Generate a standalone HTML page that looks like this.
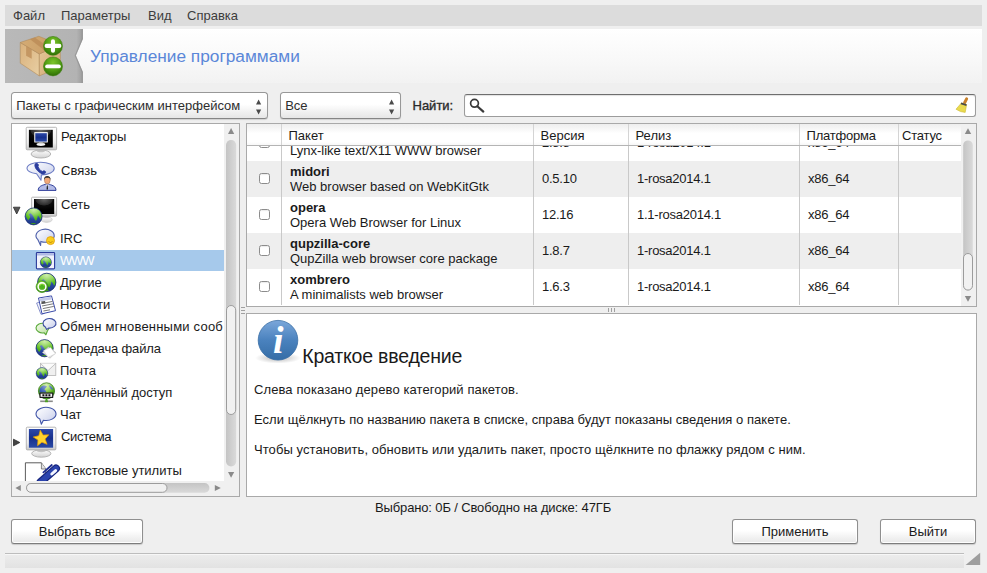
<!DOCTYPE html>
<html><head><meta charset="utf-8">
<style>
*{box-sizing:border-box;margin:0;padding:0}
html,body{width:987px;height:573px;overflow:hidden;background:#efefef}
body{font-family:"Liberation Sans",sans-serif;font-size:13px;color:#1a1a1a;position:relative;line-height:15px}
.abs{position:absolute}
#menubar{left:5px;top:5px;width:977px;height:21px;background:#dcdcdc}
#menubar span{position:absolute;top:3px;color:#3c3c3c;white-space:nowrap}
#banner{left:5px;top:29px;width:977px;height:54px;background:linear-gradient(#ffffff,#f8f8f8 60%,#f2f2f2)}
#title{left:90px;top:46px;line-height:20px;font-size:17.3px;color:#5b87d8;white-space:nowrap}
.combo{top:92px;height:27px;border:1px solid #989898;border-bottom-color:#858585;border-radius:3.5px;background:linear-gradient(#ffffff,#ffffff 45%,#f1f1f1 75%,#e6e6e6);box-shadow:0 1px 1px rgba(0,0,0,.13)}
.combo span{position:absolute;left:4.2px;top:5px;white-space:nowrap;color:#2e2e2e}
.panel{background:#fff;border:1px solid #a9a9a9}
.btn{height:25px;border:1px solid #8f8f8f;border-bottom-color:#7c7c7c;border-radius:3px;background:linear-gradient(#ffffff,#ffffff 45%,#f2f2f2 75%,#e7e7e7);text-align:center;line-height:23px;box-shadow:inset 0 0 0 1px rgba(255,255,255,.9),0 1px 1px rgba(0,0,0,.16);color:#1a1a1a}
.t{position:absolute;white-space:nowrap}
.cb{width:11px;height:11px;border:1px solid #8c8c8c;border-radius:2.5px;background:#fff;box-shadow:inset 0 1px 1px rgba(0,0,0,.08)}
.num{letter-spacing:-0.25px}
</style></head><body>
<div id="menubar" class="abs">
<span style="left:8px">Файл</span><span style="left:56px">Параметры</span><span style="left:143px">Вид</span><span style="left:182px">Справка</span>
</div>
<div id="banner" class="abs"></div>
<svg class="abs" style="left:5px;top:29px" width="80" height="54" viewBox="0 0 80 54">
<defs><linearGradient id="gn" x1="0" x2="1" y1="0" y2="0"><stop offset="0" stop-color="#b9b9b9"/><stop offset=".92" stop-color="#b3b3b3"/><stop offset="1" stop-color="#9c9c9c"/></linearGradient></defs>
<path d="M0 0H77.8V10L70.8 26.5L77.8 43V54H0Z" fill="url(#gn)"/>
<path d="M77.3 0V10L70.3 26.5L77.3 43V54" fill="none" stroke="#8e8e8e" stroke-width="1.2" opacity=".7"/>
</svg>
<svg class="abs" style="left:10px;top:28px" width="64" height="56" viewBox="0 0 655 573">
<defs>
<linearGradient id="bxL" x1="0" x2="1" y1="0" y2="1"><stop offset="0" stop-color="#d9b07a"/><stop offset="1" stop-color="#e8cfa4"/></linearGradient>
<linearGradient id="bxR" x1="0" x2="1" y1="0" y2="1"><stop offset="0" stop-color="#e6c89a"/><stop offset="1" stop-color="#cfa871"/></linearGradient>
<linearGradient id="bxT" x1="0" x2="1" y1="0" y2="0"><stop offset="0" stop-color="#d4ab74"/><stop offset="1" stop-color="#c79b63"/></linearGradient>
<radialGradient id="grn" cx=".5" cy=".3" r=".7"><stop offset="0" stop-color="#7cc52a"/><stop offset=".6" stop-color="#4e9a12"/><stop offset="1" stop-color="#2f6e06"/></radialGradient>
</defs>
<path d="M105 148L300 265V490L105 360Z" fill="url(#bxL)" stroke="#b08a5a" stroke-width="6"/>
<path d="M300 265L515 172V400L300 490Z" fill="url(#bxR)" stroke="#b08a5a" stroke-width="6"/>
<path d="M105 148L295 85L515 172L300 265Z" fill="url(#bxT)" stroke="#b08a5a" stroke-width="6"/>
<path d="M205 115L255 98L420 215L365 238Z" fill="#b98a55" opacity=".75"/>
<path d="M165 185L222 218V315L165 283Z" fill="#c0915c" opacity=".85"/>
<circle cx="440" cy="183" r="97" fill="url(#grn)" stroke="#3a7d0c" stroke-width="6"/>
<circle cx="440" cy="393" r="97" fill="url(#grn)" stroke="#3a7d0c" stroke-width="6"/>
<path d="M440 135V232M375 183H505" stroke="#fff" stroke-width="42" stroke-linecap="round"/>
<path d="M380 393H500" stroke="#fff" stroke-width="40" stroke-linecap="round"/>
</svg>
<div id="title" class="abs">Управление программами</div>

<div class="combo abs" style="left:11px;width:257px"><span>Пакеты с графическим интерфейсом</span>
<svg class="abs" style="left:243px;top:6px" width="8" height="17" viewBox="0 0 8 17"><path d="M1 5.6L3.6 0.6L6.2 5.6Z M1 10.4L3.6 15.4L6.2 10.4Z" fill="#4a4a4a"/></svg></div>
<div class="combo abs" style="left:280px;width:121px"><span>Все</span>
<svg class="abs" style="left:107px;top:6px" width="8" height="17" viewBox="0 0 8 17"><path d="M1 5.6L3.6 0.6L6.2 5.6Z M1 10.4L3.6 15.4L6.2 10.4Z" fill="#4a4a4a"/></svg></div>
<div class="t" style="left:412.5px;top:98px;color:#2a2a2a;-webkit-text-stroke:0.35px #2a2a2a">Найти:</div>
<div class="abs" style="left:464px;top:94px;width:512px;height:23px;border:1px solid #9c9c9c;border-top-color:#6e6e6e;border-radius:3px;background:#fff;box-shadow:inset 0 1px 1px rgba(0,0,0,.12)"></div>
<svg class="abs" style="left:468px;top:97px" width="18" height="17" viewBox="0 0 18 17"><circle cx="6.5" cy="6.3" r="3.9" fill="none" stroke="#3a3a3a" stroke-width="1.7"/><path d="M9.3 9.3L15.3 14.6" stroke="#3a3a3a" stroke-width="2.2" stroke-linecap="round"/></svg>
<svg class="abs" style="left:954px;top:95px" width="20" height="20" viewBox="954 95 20 20">
<path d="M966.6 98.9L964.6 102.8" stroke="#c8802a" stroke-width="3" stroke-linecap="round"/>
<path d="M961.4 103L966.6 104.6L965.2 112.4L960.5 111.6L956 109.2Z" fill="#e9da4e" stroke="#cdb92f" stroke-width=".6"/>
<path d="M961.3 102.6L966.7 104.3L966.3 106L960.7 104.2Z" fill="#4a4a4a"/>
</svg>

<div id="tree" class="panel abs" style="left:11px;top:123px;width:229px;height:374px;background:#f0f0f0"></div>
<div id="treeclip" class="abs" style="left:12px;top:124px;width:212px;height:357px;overflow:hidden;background:#fff">
<div class="abs" style="left:0;top:126px;width:212px;height:21px;background:#a6c9eb"></div>
<div class="t" style="left:49px;top:5px">Редакторы</div>
<div class="t" style="left:49px;top:39px">Связь</div>
<div class="t" style="left:49px;top:73px">Сеть</div>
<div class="t" style="left:48px;top:107px">IRC</div>
<div class="t" style="left:48px;top:129px;color:#fff;letter-spacing:-1.2px">WWW</div>
<div class="t" style="left:48px;top:151px">Другие</div>
<div class="t" style="left:48px;top:173px">Новости</div>
<div class="t" style="left:48px;top:195px;letter-spacing:0.21px">Обмен мгновенными сооб</div>
<div class="t" style="left:48px;top:217px;letter-spacing:-0.15px">Передача файла</div>
<div class="t" style="left:48px;top:239px">Почта</div>
<div class="t" style="left:48px;top:261px">Удалённый доступ</div>
<div class="t" style="left:48px;top:283px">Чат</div>
<div class="t" style="left:49px;top:305px;letter-spacing:-0.3px">Система</div>
<div class="t" style="left:53px;top:339px">Текстовые утилиты</div>
<svg class="abs" style="left:0;top:0" width="212" height="357" viewBox="12 124 212 357">
<defs>
<clipPath id="gclip"><circle cx="10" cy="10" r="9.5"/></clipPath>
<linearGradient id="glb" x1="0" x2="0" y1="0" y2="1"><stop offset="0" stop-color="#4f74c8"/><stop offset=".55" stop-color="#2a4ba4"/><stop offset="1" stop-color="#1b3584"/></linearGradient>
<linearGradient id="lnd" x1="0" x2="0" y1="0" y2="1"><stop offset="0" stop-color="#9be04a"/><stop offset=".5" stop-color="#58bc1c"/><stop offset="1" stop-color="#3c9a12"/></linearGradient>
<radialGradient id="ggl" cx=".5" cy=".12" r=".55"><stop offset="0" stop-color="#fff" stop-opacity=".55"/><stop offset="1" stop-color="#fff" stop-opacity="0"/></radialGradient>
<radialGradient id="glg" cx=".45" cy=".25" r=".8"><stop offset="0" stop-color="#b4e860"/><stop offset=".55" stop-color="#58b01e"/><stop offset="1" stop-color="#2f7a10"/></radialGradient>
<linearGradient id="bub" x1="0" x2="1" y1="0" y2="1"><stop offset="0" stop-color="#ffffff"/><stop offset=".45" stop-color="#e6e9f6"/><stop offset="1" stop-color="#c2c9e8"/></linearGradient>
<linearGradient id="bubg" x1="0" x2="1" y1="0" y2="1"><stop offset="0" stop-color="#f4fbec"/><stop offset="1" stop-color="#b5de98"/></linearGradient>
<linearGradient id="mfr" x1="0" x2="0" y1="0" y2="1"><stop offset="0" stop-color="#ffffff"/><stop offset=".7" stop-color="#ededed"/><stop offset="1" stop-color="#c9c9c9"/></linearGradient>
<linearGradient id="std" x1="0" x2="0" y1="0" y2="1"><stop offset="0" stop-color="#ffffff"/><stop offset="1" stop-color="#d2d2d2"/></linearGradient>
<linearGradient id="scrb" x1="0" x2="0" y1="0" y2="1"><stop offset="0" stop-color="#2c48a8"/><stop offset=".5" stop-color="#17308c"/><stop offset="1" stop-color="#2a4aa6"/></linearGradient>
<radialGradient id="scrk" cx=".5" cy="0" r=".75"><stop offset="0" stop-color="#6a6a6a"/><stop offset=".55" stop-color="#2a2a2a"/><stop offset=".6" stop-color="#0c0c0c"/><stop offset="1" stop-color="#000"/></radialGradient>
</defs>
<path d="M13.4 207.2H20L16.7 214Z" fill="#555" stroke="#2e2e2e" stroke-width=".8"/>
<path d="M13.5 439.2V445.8L19.8 442.5Z" fill="#444" stroke="#2a2a2a" stroke-width=".8"/>
<!-- 1 -->
<ellipse cx="40.9" cy="154" rx="9.8" ry="4" fill="url(#std)" stroke="#a4a4a4" stroke-width=".8"/>
<path d="M35.5 149.8C36.5 153.2 45.3 153.2 46.3 149.8Z" fill="#c4c4c4"/>
<rect x="26.2" y="127.3" width="30.4" height="22.5" rx="1" fill="url(#mfr)" stroke="#a6a6a6" stroke-width=".8"/>
<rect x="28.9" y="129.8" width="23.9" height="17.7" fill="url(#scrk)"/>
<rect x="34.2" y="132.1" width="13.7" height="10.5" rx=".7" fill="#ececec"/>
<rect x="35.3" y="133.2" width="11.5" height="8.4" fill="url(#scrb)"/>
<ellipse cx="40.9" cy="144.3" rx="4.4" ry="1.6" fill="#f4f4f4"/>
<path d="M39 142.6H43L43.4 144H38.6Z" fill="#d8d8d8"/>
<!-- 2 -->
<path d="M36.6 173.8C29.5 172.4 27 170.6 27 168.4C27 165 33 162.3 40.6 162.3C48.2 162.3 54.2 165 54.2 168.6C54.2 172 48.6 174.9 41.4 174.9L41 180.2Z" fill="url(#bub)" stroke="#6c7cc4" stroke-width="1.1" stroke-linejoin="round"/>
<path d="M35 164.2C34.2 167 37 171.6 42.4 173.9C44 174.5 45.8 173.4 45.6 171.8C45 170.6 43.2 170.6 42.4 171.6C40.2 170.6 38.6 168.4 38 166.4C38.8 165.4 38.4 163.8 37 163.5C36 163.3 35.2 163.6 35 164.2Z" fill="#2b3d9e" stroke="#2b3d9e" stroke-width=".9" stroke-linejoin="round"/>
<ellipse cx="47.3" cy="180.3" rx="2.9" ry="3.7" fill="#f2a878" stroke="#8a5a3a" stroke-width=".4"/>
<path d="M44 180.4C43.2 174.6 51.4 174.6 50.6 180.4C50 178 49 177.6 47.3 177.8C45.6 177.6 44.6 178 44 180.4Z" fill="#2a2a2a"/>
<path d="M38.2 190.4C38.2 186.6 41.6 185.4 45.2 184.4H49.4C53 185.4 56 186.6 56 190.4Z" fill="#b3bbe6" stroke="#1c2c90" stroke-width=".9"/>
<path d="M45.6 184.4L47.3 187L49 184.4Z" fill="#ffffff"/>
<path d="M46.9 185.2H47.7L48 189.6H46.6Z" fill="#111"/>
<!-- 3 -->
<ellipse cx="46.6" cy="219.6" rx="5.6" ry="2.8" fill="url(#std)" stroke="#c4c4c4" stroke-width=".6"/>
<path d="M42.6 216.2C43.4 218.6 49.8 218.6 50.6 216.2Z" fill="#c4c4c4"/>
<rect x="31.6" y="197.2" width="25" height="19" rx="1" fill="url(#mfr)" stroke="#a6a6a6" stroke-width=".8"/>
<rect x="34" y="199" width="20.2" height="15" fill="url(#scrk)"/>
<g transform="translate(24.65 207.45) scale(0.895)"><circle cx="10" cy="10" r="9.5" fill="url(#glb)"/><path d="M.4 6.3C2 3.5 5 .4 10 .4C15 .4 18.4 3.6 19.4 7C19.8 9.4 19 12 17.6 13.6C17.2 12.2 16.8 11.2 16 10.4C15.6 9.8 15.2 9.4 14.6 9C14.6 11.4 13.8 13.6 12.5 15.2C11.4 13.8 10.6 12.4 10.2 11C9.6 9.8 9 8.8 8.2 8C7.6 7.4 7.2 6.9 6.6 6.5C5.8 6.8 5.2 7.4 4.8 8.2C5.6 9 6 9.8 6.3 10.6C5.8 12 5 13.2 4 14.2C3 13.2 2.4 12 2 11C1 9.6 .4 7.8 .4 6.3ZM6.5 18C8.5 17.2 11 17.2 12.8 18C11 19.4 8.4 19.4 6.5 18Z" fill="url(#lnd)" clip-path="url(#gclip)"/><circle cx="10" cy="10" r="9.5" fill="url(#ggl)"/><circle cx="10" cy="10" r="9.5" fill="none" stroke="#152a70" stroke-width=".8"/></g>
<!-- 4 IRC -->
<path d="M40.83 241.44L40.6 245.4L37.93 239.70A9.1 6.5 0 1 1 40.83 241.44Z" fill="url(#bub)" stroke="#4c5eaa" stroke-width="1.1" stroke-linejoin="round"/>
<circle cx="50.5" cy="240.6" r="4" fill="#f8ce1c" stroke="#e09a06" stroke-width=".8"/>
<path d="M48.6 241.2C49.4 243 51.6 243 52.4 241.2" fill="none" stroke="#b36d00" stroke-width=".7"/>
<!-- 5 WWW -->
<rect x="36.4" y="252.5" width="18.2" height="16.4" rx=".8" fill="#f1f2fb" stroke="#2a3a9a" stroke-width="1.1"/>
<rect x="37" y="253.1" width="17" height="2.4" fill="#aeb9e4"/>
<g transform="translate(40.01 256.51) scale(0.589)"><circle cx="10" cy="10" r="9.5" fill="url(#glb)"/><path d="M.4 6.3C2 3.5 5 .4 10 .4C15 .4 18.4 3.6 19.4 7C19.8 9.4 19 12 17.6 13.6C17.2 12.2 16.8 11.2 16 10.4C15.6 9.8 15.2 9.4 14.6 9C14.6 11.4 13.8 13.6 12.5 15.2C11.4 13.8 10.6 12.4 10.2 11C9.6 9.8 9 8.8 8.2 8C7.6 7.4 7.2 6.9 6.6 6.5C5.8 6.8 5.2 7.4 4.8 8.2C5.6 9 6 9.8 6.3 10.6C5.8 12 5 13.2 4 14.2C3 13.2 2.4 12 2 11C1 9.6 .4 7.8 .4 6.3ZM6.5 18C8.5 17.2 11 17.2 12.8 18C11 19.4 8.4 19.4 6.5 18Z" fill="url(#lnd)" clip-path="url(#gclip)"/><circle cx="10" cy="10" r="9.5" fill="url(#ggl)"/><circle cx="10" cy="10" r="9.5" fill="none" stroke="#152a70" stroke-width=".8"/></g>
<!-- 6 Другие -->
<g transform="translate(37.02 272.72) scale(0.968)"><circle cx="10" cy="10" r="9.5" fill="url(#glb)"/><path d="M.4 6.3C2 3.5 5 .4 10 .4C15 .4 18.4 3.6 19.4 7C19.8 9.4 19 12 17.6 13.6C17.2 12.2 16.8 11.2 16 10.4C15.6 9.8 15.2 9.4 14.6 9C14.6 11.4 13.8 13.6 12.5 15.2C11.4 13.8 10.6 12.4 10.2 11C9.6 9.8 9 8.8 8.2 8C7.6 7.4 7.2 6.9 6.6 6.5C5.8 6.8 5.2 7.4 4.8 8.2C5.6 9 6 9.8 6.3 10.6C5.8 12 5 13.2 4 14.2C3 13.2 2.4 12 2 11C1 9.6 .4 7.8 .4 6.3ZM6.5 18C8.5 17.2 11 17.2 12.8 18C11 19.4 8.4 19.4 6.5 18Z" fill="url(#lnd)" clip-path="url(#gclip)"/><circle cx="10" cy="10" r="9.5" fill="url(#ggl)"/><circle cx="10" cy="10" r="9.5" fill="none" stroke="#152a70" stroke-width=".8"/></g>
<circle cx="42" cy="286.7" r="5.9" fill="url(#glg)" stroke="#3c9416" stroke-width=".7"/>
<circle cx="42" cy="286.7" r="3.9" fill="none" stroke="#ffffff" stroke-width="1.5"/>
<path d="M42 283.9L44.8 286.7L42 289.5L39.2 286.7Z" fill="#4cb41c"/>
<!-- 7 Новости -->
<path d="M36.6 303L40.6 301.8L44.4 313.4L41 314.4Z" fill="#f4f5fc" stroke="#5b69b8" stroke-width=".7"/>
<path d="M38.5 298L51.5 295.9L55.5 310.7L42 313.8Z" fill="#ffffff" stroke="#3a4aa8" stroke-width="1"/>
<path d="M39.6 298.6L51 296.8L51.8 299.6L40.4 301.6Z" fill="#c5cbea"/>
<path d="M41.4 303.6L52.6 301.4M42 306L53.2 303.8M42.8 308.6L53.8 306.4M43.4 311L50 309.8" stroke="#7a7a7a" stroke-width="1"/>
<path d="M41.2 301.6L45 300.9L45.6 303.2L41.8 303.9Z" fill="#555"/>
<!-- 8 Обмен -->
<path d="M47.30 331.19L45.9 334.8L44.06 332.74A6.4 4.8 0 1 1 47.30 331.19Z" fill="url(#bubg)" stroke="#58a838" stroke-width="1.1" stroke-linejoin="round"/>
<path d="M48.93 328.08L46.7 329.4L45.32 326.98A6.5 4.8 0 1 1 48.93 328.08Z" fill="url(#bub)" stroke="#3a4ca0" stroke-width="1.1" stroke-linejoin="round"/>
<!-- 9 Передача -->
<g transform="translate(35.55 339.15) scale(0.905)"><circle cx="10" cy="10" r="9.5" fill="url(#glb)"/><path d="M.4 6.3C2 3.5 5 .4 10 .4C15 .4 18.4 3.6 19.4 7C19.8 9.4 19 12 17.6 13.6C17.2 12.2 16.8 11.2 16 10.4C15.6 9.8 15.2 9.4 14.6 9C14.6 11.4 13.8 13.6 12.5 15.2C11.4 13.8 10.6 12.4 10.2 11C9.6 9.8 9 8.8 8.2 8C7.6 7.4 7.2 6.9 6.6 6.5C5.8 6.8 5.2 7.4 4.8 8.2C5.6 9 6 9.8 6.3 10.6C5.8 12 5 13.2 4 14.2C3 13.2 2.4 12 2 11C1 9.6 .4 7.8 .4 6.3ZM6.5 18C8.5 17.2 11 17.2 12.8 18C11 19.4 8.4 19.4 6.5 18Z" fill="url(#lnd)" clip-path="url(#gclip)"/><circle cx="10" cy="10" r="9.5" fill="url(#ggl)"/><circle cx="10" cy="10" r="9.5" fill="none" stroke="#152a70" stroke-width=".8"/></g>
<path d="M42.4 352.4L48.4 347L55.8 352.6L50 358.2Z" fill="#ececec" stroke="#b0b0b0" stroke-width=".6"/>
<path d="M43.6 350.6L50.6 347.4L55.4 353.8L48.2 357.4Z" fill="#ffffff" stroke="#c0c0c0" stroke-width=".5"/>
<!-- 10 Почта -->
<rect x="40.4" y="363.3" width="15.4" height="12.2" fill="#f0f0f0" stroke="#b4b4b4" stroke-width=".8"/>
<path d="M40.6 363.6L48 370.6L55.6 363.6" fill="#fbfbfb" stroke="#b8b8b8" stroke-width=".8"/>
<g transform="translate(35.89 367.29) scale(0.611)"><circle cx="10" cy="10" r="9.5" fill="url(#glb)"/><path d="M.4 6.3C2 3.5 5 .4 10 .4C15 .4 18.4 3.6 19.4 7C19.8 9.4 19 12 17.6 13.6C17.2 12.2 16.8 11.2 16 10.4C15.6 9.8 15.2 9.4 14.6 9C14.6 11.4 13.8 13.6 12.5 15.2C11.4 13.8 10.6 12.4 10.2 11C9.6 9.8 9 8.8 8.2 8C7.6 7.4 7.2 6.9 6.6 6.5C5.8 6.8 5.2 7.4 4.8 8.2C5.6 9 6 9.8 6.3 10.6C5.8 12 5 13.2 4 14.2C3 13.2 2.4 12 2 11C1 9.6 .4 7.8 .4 6.3ZM6.5 18C8.5 17.2 11 17.2 12.8 18C11 19.4 8.4 19.4 6.5 18Z" fill="url(#lnd)" clip-path="url(#gclip)"/><circle cx="10" cy="10" r="9.5" fill="url(#ggl)"/><circle cx="10" cy="10" r="9.5" fill="none" stroke="#152a70" stroke-width=".8"/></g>
<!-- 11 Удалённый -->
<g transform="translate(37.97 382.37) scale(0.853)"><circle cx="10" cy="10" r="9.5" fill="url(#glg)"/><path d="M3 6C5 3.5 8 3 10.5 4.5C10 6.5 8 6.6 7.6 8.4C9 9.4 10 10.6 9.6 12H2C1.4 10 1.8 7.8 3 6ZM13 3.4C15 4 17 6 17.6 8.4C16 8.6 14.6 7.6 14 6C13.2 5 12.8 4.2 13 3.4Z" fill="#2d55b0" clip-path="url(#gclip)"/><circle cx="10" cy="10" r="9.5" fill="url(#ggl)"/><circle cx="10" cy="10" r="9.5" fill="none" stroke="#2c7012" stroke-width=".8"/></g>
<rect x="39.4" y="392.6" width="13.9" height="5.3" rx=".6" fill="#1c1c1c"/>
<rect x="40.6" y="393.7" width="11.5" height="3.1" fill="#f4f4f4"/>
<path d="M42.4 395.25H44.4M45.4 395.25H47.4M48.4 395.25H50.4" stroke="#111" stroke-width="2"/>
<path d="M46.5 398V401" stroke="#4aa020" stroke-width="1.6"/>
<path d="M40.2 401.3H52.8" stroke="#8a8a8a" stroke-width="1.6"/>
<path d="M45 401.3H48" stroke="#4aa020" stroke-width="1.8"/>
<!-- 12 Чат -->
<path d="M43.41 420.28L41.3 424.2L39.84 419.10A10 6.6 0 1 1 43.41 420.28Z" fill="url(#bub)" stroke="#3f53a8" stroke-width="1.1" stroke-linejoin="round"/>
<!-- 13 Система -->
<ellipse cx="41.3" cy="453.5" rx="9.6" ry="3.7" fill="url(#std)" stroke="#a4a4a4" stroke-width=".8"/>
<path d="M36 450C37 453 45.6 453 46.6 450Z" fill="#c4c4c4"/>
<rect x="26.3" y="427.2" width="29.6" height="22.7" rx="1" fill="url(#mfr)" stroke="#a6a6a6" stroke-width=".8"/>
<rect x="28.9" y="429" width="24.2" height="18.7" fill="url(#scrb)"/>
<path d="M41.3 430.2L43.5 435.4L49.1 435.9L44.9 439.6L46.1 445.1L41.3 442.2L36.5 445.1L37.7 439.6L33.5 435.9L39.1 435.4Z" fill="#ffd42e" stroke="#e8a000" stroke-width=".7" stroke-linejoin="round" transform="rotate(-8 41.3 437.8)"/>
<!-- 14 Текстовые -->
<path d="M25.4 462.8H41.4L45.8 469V486H25.4Z" fill="#ffffff" stroke="#4a4a4a" stroke-width=".9"/>
<path d="M41.4 462.8V469H45.8" fill="#e2e2e2" stroke="#6a6a6a" stroke-width=".8"/>
<path d="M56 468.4L40.6 482" stroke="#16247c" stroke-width="8" stroke-linecap="round"/>
<path d="M56 468.4L40.6 482" stroke="#2b44ae" stroke-width="5.6" stroke-linecap="round"/>
<path d="M55.6 470.6L51.8 474" stroke="#f4f6ff" stroke-width="3" stroke-linecap="round"/>
<path d="M51.8 465L43.4 472.4" stroke="#1c2c90" stroke-width="1.8" stroke-linecap="round"/>
</svg>
</div>
<!-- tree v scrollbar -->
<svg class="abs" style="left:224px;top:124px" width="15" height="372" viewBox="224 124 15 372">
<defs><linearGradient id="trg" x1="0" x2="1" y1="0" y2="0"><stop offset="0" stop-color="#c4c4c4"/><stop offset="1" stop-color="#dadada"/></linearGradient></defs>
<path d="M228 134H234.2L231.1 128Z" fill="#8a8a8a"/>
<path d="M228 472H234.2L231.1 477.8Z" fill="#8a8a8a"/>
<rect x="226" y="140" width="10.2" height="326.4" rx="5.1" fill="url(#trg)"/>
<rect x="226.5" y="305.5" width="9.2" height="109" rx="4.6" fill="#f1f1f1" stroke="#9c9c9c" stroke-width="1"/>
</svg>
<!-- tree h scrollbar -->
<svg class="abs" style="left:12px;top:481px" width="212" height="15" viewBox="12 481 212 15">
<defs><linearGradient id="trh" x1="0" x2="0" y1="0" y2="1"><stop offset="0" stop-color="#c4c4c4"/><stop offset="1" stop-color="#dadada"/></linearGradient></defs>
<path d="M20.8 485V491L15.4 488Z" fill="#8a8a8a"/>
<path d="M214.8 485V491L220.8 488Z" fill="#8a8a8a"/>
<rect x="26" y="483" width="183.4" height="9.8" rx="4.9" fill="url(#trh)"/>
<rect x="26.5" y="483.5" width="140.5" height="8.8" rx="4.4" fill="#f1f1f1" stroke="#9c9c9c" stroke-width="1"/>
</svg>
<!-- hpane handle -->
<div class="abs" style="left:241px;top:307px;width:4px;height:1px;background:#a0a0a0;box-shadow:0 3px 0 #a0a0a0,0 6px 0 #a0a0a0"></div>
<div id="list" class="panel abs" style="left:246px;top:123px;width:731px;height:184px;background:#f0f0f0"></div>
<div id="listclip" class="abs" style="left:247px;top:124px;width:714px;height:182px;overflow:hidden;background:#fff">
<div class="cb abs" style="left:12px;top:13px"></div>
<div class="t" style="left:43px;top:4px;font-weight:bold">lynx</div>
<div class="t" style="left:43px;top:19px">Lynx-like text/X11 WWW browser</div>
<div class="t num" style="left:295px;top:11px">2.8.8</div>
<div class="t num" style="left:390px;top:11px">1-rosa2014.1</div>
<div class="t num" style="left:561px;top:11px">x86_64</div>
<div class="abs" style="left:0;top:37px;width:714px;height:36px;background:#eeeeee"></div>
<div class="cb abs" style="left:12px;top:49px"></div>
<div class="t" style="left:43px;top:40px;font-weight:bold">midori</div>
<div class="t" style="left:43px;top:55px">Web browser based on WebKitGtk</div>
<div class="t num" style="left:295px;top:47px">0.5.10</div>
<div class="t num" style="left:390px;top:47px">1-rosa2014.1</div>
<div class="t num" style="left:561px;top:47px">x86_64</div>
<div class="cb abs" style="left:12px;top:85px"></div>
<div class="t" style="left:43px;top:76px;font-weight:bold">opera</div>
<div class="t" style="left:43px;top:91px">Opera Web Browser for Linux</div>
<div class="t num" style="left:295px;top:83px">12.16</div>
<div class="t num" style="left:390px;top:83px">1.1-rosa2014.1</div>
<div class="t num" style="left:561px;top:83px">x86_64</div>
<div class="abs" style="left:0;top:109px;width:714px;height:36px;background:#eeeeee"></div>
<div class="cb abs" style="left:12px;top:121px"></div>
<div class="t" style="left:43px;top:112px;font-weight:bold">qupzilla-core</div>
<div class="t" style="left:43px;top:127px">QupZilla web browser core package</div>
<div class="t num" style="left:295px;top:119px">1.8.7</div>
<div class="t num" style="left:390px;top:119px">1-rosa2014.1</div>
<div class="t num" style="left:561px;top:119px">x86_64</div>
<div class="cb abs" style="left:12px;top:157px"></div>
<div class="t" style="left:43px;top:148px;font-weight:bold">xombrero</div>
<div class="t" style="left:43px;top:163px">A minimalists web browser</div>
<div class="t num" style="left:295px;top:155px">1.6.3</div>
<div class="t num" style="left:390px;top:155px">1-rosa2014.1</div>
<div class="t num" style="left:561px;top:155px">x86_64</div>
<div class="abs" style="left:34px;top:0;width:1px;height:181px;background:#c9c9c9"></div>
<div class="abs" style="left:286px;top:0;width:1px;height:181px;background:#c9c9c9"></div>
<div class="abs" style="left:381px;top:0;width:1px;height:181px;background:#c9c9c9"></div>
<div class="abs" style="left:552px;top:0;width:1px;height:181px;background:#c9c9c9"></div>
<div class="abs" style="left:651px;top:0;width:1px;height:181px;background:#c9c9c9"></div>
<div class="abs" style="left:0;top:0;width:714px;height:22px;background:linear-gradient(#eeeeee,#ffffff 45%,#ffffff 85%,#f8f8f8);border-bottom:1px solid #b4b4b4"></div>
<div class="abs" style="left:34px;top:0;width:1px;height:21px;background:#d4d4d4"></div>
<div class="abs" style="left:286px;top:0;width:1px;height:21px;background:#d4d4d4"></div>
<div class="abs" style="left:381px;top:0;width:1px;height:21px;background:#d4d4d4"></div>
<div class="abs" style="left:552px;top:0;width:1px;height:21px;background:#d4d4d4"></div>
<div class="abs" style="left:651px;top:0;width:1px;height:21px;background:#d4d4d4"></div>
<div class="t" style="left:41.5px;top:4px;">Пакет</div>
<div class="t" style="left:293.5px;top:4px;">Версия</div>
<div class="t" style="left:388.5px;top:4px;">Релиз</div>
<div class="t" style="left:559.5px;top:4px; letter-spacing:-0.2px;">Платформа</div>
<div class="t" style="left:655px;top:4px;letter-spacing:-0.2px">Статус</div>
</div>
<svg class="abs" style="left:961px;top:124px" width="15" height="182" viewBox="961 124 15 182">
<path d="M964.8 134H971.2L968 128.2Z" fill="#8a8a8a"/>
<path d="M964.8 296H971.2L968 301.8Z" fill="#8a8a8a"/>
<rect x="963.2" y="140.4" width="9.6" height="150" rx="4.8" fill="url(#trg)"/>
<rect x="963.5" y="253.5" width="9" height="36.6" rx="4.5" fill="#f1f1f1" stroke="#9c9c9c" stroke-width="1"/>
</svg>
<div class="abs" style="left:608px;top:308px;width:1px;height:4px;background:#a0a0a0;box-shadow:3px 0 0 #a0a0a0,6px 0 0 #a0a0a0"></div>
<div id="info" class="panel abs" style="left:246px;top:313px;width:731px;height:184px"></div>
<svg class="abs" style="left:252px;top:316px" width="52" height="52" viewBox="252 316 52 52">
<defs>
<linearGradient id="inf" x1="0" x2="0" y1="0" y2="1"><stop offset="0" stop-color="#7ba7da"/><stop offset=".5" stop-color="#4a82be"/><stop offset="1" stop-color="#356da6"/></linearGradient>
<radialGradient id="ish" cx=".5" cy=".5" r=".5"><stop offset="0" stop-color="#000" stop-opacity=".28"/><stop offset="1" stop-color="#000" stop-opacity="0"/></radialGradient>
</defs>
<ellipse cx="278" cy="358" rx="23" ry="5.5" fill="url(#ish)"/>
<circle cx="278" cy="340.2" r="19.8" fill="url(#inf)" stroke="#3a6fa6" stroke-width=".8"/>
<text x="278.4" y="353" text-anchor="middle" font-family="Liberation Serif, serif" font-style="italic" font-weight="bold" font-size="38" fill="#ffffff">i</text>
</svg>
<div class="t" style="left:302.3px;top:345px;font-size:19.5px;line-height:22px;letter-spacing:-0.2px">Краткое введение</div>
<div class="t" style="left:254px;top:382px;letter-spacing:0.1px">Слева показано дерево категорий пакетов.</div>
<div class="t" style="left:254px;top:412px;letter-spacing:0.035px">Если щёлкнуть по названию пакета в списке, справа будут показаны сведения о пакете.</div>
<div class="t" style="left:254px;top:442px;letter-spacing:0.07px">Чтобы установить, обновить или удалить пакет, просто щёлкните по флажку рядом с ним.</div>

<div class="t" style="left:375px;top:500px;letter-spacing:-0.14px">Выбрано: 0Б / Свободно на диске: 47ГБ</div>
<div class="btn abs" style="left:11px;top:519px;width:132px">Выбрать все</div>
<div class="btn abs" style="left:732px;top:519px;width:126px">Применить</div>
<div class="btn abs" style="left:880px;top:519px;width:96px">Выйти</div>
<div class="abs" style="left:5px;top:553px;width:959px;height:15px;background:linear-gradient(#f7f7f7,#f7f7f7 1px,#ececec 1px,#e2e2e2);border-top:1px solid #bdbdbd"></div>
<svg class="abs" style="left:964px;top:552px" width="18" height="15" viewBox="964 552 18 15"><path d="M980.2 552.8V565H965.6Z" fill="#9e9e9e"/></svg>
</body></html>
